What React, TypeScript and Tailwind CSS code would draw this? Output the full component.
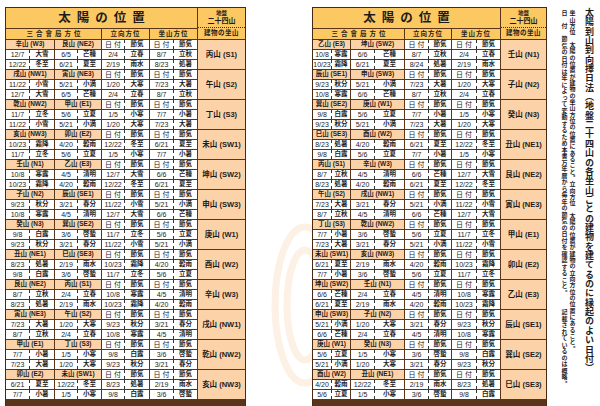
type Group = [string, string, string, string, string]

const LEFT: Group[] = [
  ['辛山 (W3)', '艮山 (NE2)', '12/7 大雪 6/5 芒種 2/4 立春 8/7 立秋', '12/22 冬至 6/21 夏至 2/19 雨水 8/23 処暑', '丙山 (S1)'],
  ['戌山 (NW1)', '寅山 (NE3)', '11/22 小雪 5/21 小満 1/20 大寒 7/23 大暑', '12/7 大雪 6/5 芒種 2/4 立春 8/7 立秋', '午山 (S2)'],
  ['乾山 (NW2)', '甲山 (E1)', '11/7 立冬 5/6 立夏 1/5 小寒 7/7 小暑', '11/22 小雪 5/21 小満 1/20 大寒 7/23 大暑', '丁山 (S3)'],
  ['亥山 (NW3)', '卯山 (E2)', '10/23 霜降 4/20 穀雨 12/22 冬至 6/21 夏至', '11/7 立冬 5/6 立夏 1/5 小寒 7/7 小暑', '未山 (SW1)'],
  ['壬山 (N1)', '乙山 (E3)', '10/8 寒露 4/5 清明 12/7 大雪 6/6 芒種', '10/23 霜降 4/20 穀雨 12/22 冬至 6/21 夏至', '坤山 (SW2)'],
  ['子山 (N2)', '辰山 (SE1)', '9/23 秋分 3/21 春分 11/22 小雪 5/21 小満', '10/8 寒露 4/5 清明 12/7 大雪 6/6 芒種', '申山 (SW3)'],
  ['癸山 (N3)', '巽山 (SE2)', '9/8 白露 3/6 啓蟄 11/7 立冬 5/6 立夏', '9/23 秋分 3/21 春分 11/22 小雪 5/21 小満', '庚山 (W1)'],
  ['丑山 (NE1)', '巳山 (SE3)', '8/23 処暑 2/19 雨水 10/23 霜降 4/20 穀雨', '9/8 白露 3/6 啓蟄 11/7 立冬 5/6 立夏', '酉山 (W2)'],
  ['艮山 (NE2)', '丙山 (S1)', '8/7 立秋 2/4 立春 10/8 寒露 4/5 清明', '8/23 処暑 2/19 雨水 10/23 霜降 4/20 穀雨', '辛山 (W3)'],
  ['寅山 (NE3)', '午山 (S2)', '7/23 大暑 1/20 大寒 9/23 秋分 3/21 春分', '8/7 立秋 2/4 立春 10/8 寒露 4/5 清明', '戌山 (NW1)'],
  ['甲山 (E1)', '丁山 (S3)', '7/7 小暑 1/5 小寒 9/8 白露 3/6 啓蟄', '7/23 大暑 1/20 大寒 9/23 秋分 3/21 春分', '乾山 (NW2)'],
  ['卯山 (E2)', '未山 (SW1)', '6/21 夏至 12/22 冬至 8/23 処暑 2/19 雨水', '7/7 小暑 1/5 小寒 9/8 白露 3/6 啓蟄', '亥山 (NW3)'],
]

const RIGHT: Group[] = [
  ['乙山 (E3)', '坤山 (SW2)', '10/8 寒露 6/6 芒種 8/7 立秋 2/4 立春', '10/23 霜降 6/21 夏至 8/24 処暑 2/19 雨水', '壬山 (N1)'],
  ['辰山 (SE1)', '申山 (SW3)', '9/23 秋分 5/21 小満 7/23 大暑 1/20 大寒', '10/8 寒露 6/6 芒種 8/7 立秋 2/4 立春', '子山 (N2)'],
  ['巽山 (SE2)', '庚山 (W1)', '9/8 白露 5/6 立夏 7/7 小暑 1/5 小寒', '9/23 秋分 5/21 小満 7/23 大暑 1/20 大寒', '癸山 (N3)'],
  ['巳山 (SE3)', '酉山 (W2)', '8/23 処暑 4/20 穀雨 6/21 夏至 12/22 冬至', '9/8 白露 5/6 立夏 7/7 小暑 1/5 小寒', '丑山 (NE1)'],
  ['丙山 (S1)', '辛山 (W3)', '8/7 立秋 4/5 清明 6/6 芒種 12/7 大雪', '8/23 処暑 4/20 穀雨 6/21 夏至 12/22 冬至', '艮山 (NE2)'],
  ['午山 (S2)', '戌山 (NW1)', '7/23 大暑 3/21 春分 5/21 小満 11/22 小雪', '8/7 立秋 4/5 清明 6/6 芒種 12/7 大雪', '寅山 (NE3)'],
  ['丁山 (S3)', '乾山 (NW2)', '7/7 小暑 3/6 啓蟄 5/6 立夏 11/7 立冬', '7/23 大暑 3/21 春分 5/21 小満 11/22 小雪', '甲山 (E1)'],
  ['未山 (SW1)', '亥山 (NW3)', '6/21 夏至 2/19 雨水 4/20 穀雨 10/23 霜降', '7/7 小暑 3/6 啓蟄 5/6 立夏 11/7 立冬', '卯山 (E2)'],
  ['坤山 (SW2)', '壬山 (N1)', '6/6 芒種 2/4 立春 4/5 清明 10/8 寒露', '6/21 夏至 2/19 雨水 4/20 穀雨 10/23 霜降', '乙山 (E3)'],
  ['申山 (SW3)', '子山 (N2)', '5/21 小満 1/20 大寒 3/21 春分 9/23 秋分', '6/6 芒種 2/4 立春 4/5 清明 10/8 寒露', '辰山 (SE1)'],
  ['庚山 (W1)', '癸山 (N3)', '5/6 立夏 1/5 小寒 3/6 啓蟄 9/8 白露', '5/21 小満 1/20 大寒 3/21 春分 9/23 秋分', '巽山 (SE2)'],
  ['酉山 (W2)', '丑山 (NE1)', '4/20 穀雨 12/22 冬至 2/19 雨水 8/23 処暑', '5/6 立夏 1/5 小寒 3/6 啓蟄 9/8 白露', '巳山 (SE3)'],
]

const yellow = 'bg-[#fcc862]'
const peach = 'bg-[#fcd3a9]'
const label = 'flex items-center justify-center font-bold leading-none'

function Pair({ d, s, w }: { d: string; s: string; w: string }) {
  return (
    <div className="flex bg-white">
      <span className={`${w} flex shrink-0 items-center justify-center text-[7px] leading-none`}>{d}</span>
      <span className="flex flex-1 items-center justify-center border-l border-dashed border-[#333] text-[6.5px] font-bold leading-none">
        {s}
      </span>
    </div>
  )
}

function SunTable({ data, cols, dates }: { data: Group[]; cols: string; dates: string[] }) {
  return (
    <div
      className={`grid ${cols} shrink-0 grid-rows-[20px_10px_repeat(36,9px)] gap-px border-[1.5px] border-[#4a2912] bg-[#5a3519] text-[#1c1c1c]`}
    >
      <div className={`${label} ${yellow} col-span-4 pl-[6px] text-[12.5px] tracking-[6px]`}>太陽の位置</div>
      <div className={`row-span-2 flex flex-col ${yellow}`}>
        <div className="flex h-[20px] flex-col items-center justify-center border-b border-dotted border-[#333] font-bold leading-none">
          <span className="text-[5.5px]">地盤</span>
          <span className="mt-[1px] text-[7px]">二十四山</span>
        </div>
        <div className={`${label} flex-1 text-[6.5px] tracking-[0.5px]`}>建物の坐山</div>
      </div>
      <div className={`${label} ${yellow} col-span-2 pl-[3px] text-[6.5px] tracking-[3px]`}>三合會局方位</div>
      <div className={`${label} ${yellow} text-[6.5px] tracking-[1px]`}>立向方位</div>
      <div className={`${label} ${yellow} text-[6.5px] tracking-[1px]`}>坐山方位</div>
      {data.map(([a, b, r1, r2, bld]) => {
        const x = r1.split(' ')
        const y = r2.split(' ')
        return [
          <div key={a + 'a'} className={`${label} ${peach} text-[6.5px]`}>{a}</div>,
          <div key={a + 'b'} className={`${label} ${peach} text-[6.5px]`}>{b}</div>,
          <Pair key={a + 'c'} d="日 付" s="節気" w={dates[2]} />,
          <Pair key={a + 'd'} d="日 付" s="節気" w={dates[3]} />,
          <div key={a + 'e'} className={`${label} ${peach} row-span-3 text-[7.5px]`}>{bld}</div>,
          ...[x, y].flatMap((r, k) =>
            [0, 1, 2, 3].map((i) => <Pair key={a + k + i} d={r[i * 2]} s={r[i * 2 + 1]} w={dates[i]} />),
          ),
        ]
      })}
    </div>
  )
}

function Notes() {
  return (
    <div className="h-[400px] w-[46px] pr-[7px] text-[#1c1c1c] [writing-mode:vertical-rl]">
      <p className="mt-[1px] ml-[9px] text-[9px] font-bold leading-none tracking-[0.35px]">
        太陽到山到向擇日法（地盤二十四山の各坐山ごとの建物を建てるのに縁起のよい日付）
      </p>
      <p className="mt-[3px] ml-[2px] text-[6px] font-bold leading-none tracking-[0.33px]">
        坐山方位　太陽の位置が建物の坐山方位の位置にあること。立向方位　太陽の位置が建物の立向方位の位置にあること。
      </p>
      <p className="mt-[3px] text-[6px] font-bold leading-none tracking-[0.5px]">
        日　付　節気の日付は年によって変動するため本書万年暦から毎年の節気の日付を確認すること。　　記載されているのは概略。
      </p>
    </div>
  )
}

export default function App() {
  return (
    <div className="relative h-[406px] w-[600px] overflow-hidden bg-white font-['Liberation_Sans','Noto_Sans_CJK_JP',sans-serif]">
      <svg className="absolute inset-0" width="600" height="406" viewBox="0 0 600 406">
        <g fill="none" stroke="#fdf0e4" strokeWidth="7">
          <ellipse cx="305" cy="305" rx="30" ry="78" />
          <ellipse cx="305" cy="305" rx="18" ry="55" />
        </g>
      </svg>
      <div className="relative flex pt-[7px] pl-[5px]">
        <SunTable
          data={LEFT}
          cols="grid-cols-[48px_46px_47px_47px_47px]"
          dates={['w-[23px]', 'w-[22px]', 'w-[22px]', 'w-[23px]']}
        />
        <div className="w-[66px] shrink-0" />
        <SunTable
          data={RIGHT}
          cols="grid-cols-[37px_53px_46px_48px_45px]"
          dates={['w-[18px]', 'w-[23px]', 'w-[23px]', 'w-[24px]']}
        />
        <div className="flex flex-1 justify-end">
          <Notes />
        </div>
      </div>
    </div>
  )
}
